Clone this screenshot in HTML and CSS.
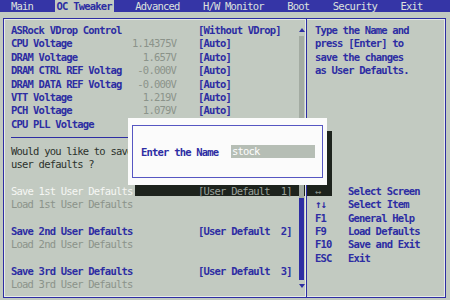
FILE: index.html
```html
<!DOCTYPE html>
<html lang="en">
<head>
  <meta charset="UTF-8" />
  <title>BIOS - OC Tweaker</title>
  <link rel="stylesheet" href="styles.css">
</head>
<body>

  <nav class="menu">
    <span class="tab">Main</span>
    <span class="tab active">OC Tweaker</span>
    <span class="tab">Advanced</span>
    <span class="tab">H/W Monitor</span>
    <span class="tab">Boot</span>
    <span class="tab">Security</span>
    <span class="tab">Exit</span>
  </nav>

  <div class="frame">
    <section class="settings">
      <div class="rows">
        <div class="row"><span class="label">ASRock VDrop Control</span><span class="val"></span><span class="opt">[Without VDrop]</span></div>
        <div class="row"><span class="label">CPU Voltage</span><span class="val">1.14375V</span><span class="opt">[Auto]</span></div>
        <div class="row"><span class="label">DRAM Voltage</span><span class="val">1.657V</span><span class="opt">[Auto]</span></div>
        <div class="row"><span class="label">DRAM CTRL REF Voltag</span><span class="val">-0.000V</span><span class="opt">[Auto]</span></div>
        <div class="row"><span class="label">DRAM DATA REF Voltag</span><span class="val">-0.000V</span><span class="opt">[Auto]</span></div>
        <div class="row"><span class="label">VTT Voltage</span><span class="val">1.219V</span><span class="opt">[Auto]</span></div>
        <div class="row"><span class="label">PCH Voltage</span><span class="val">1.079V</span><span class="opt">[Auto]</span></div>
        <div class="row"><span class="label">CPU PLL Voltage</span></div>
        <div class="sep"></div>
        <div class="row note">Would you like to save</div>
        <div class="row note">user defaults ?</div>
        <div class="row"></div>
        <div class="row selected"><span class="label">Save 1st User Defaults</span><span class="val"></span><span class="opt">[User Default  1]</span></div>
        <div class="row dim">Load 1st User Defaults</div>
        <div class="row"></div>
        <div class="row"><span class="label">Save 2nd User Defaults</span><span class="val"></span><span class="opt">[User Default  2]</span></div>
        <div class="row dim">Load 2nd User Defaults</div>
        <div class="row"></div>
        <div class="row"><span class="label">Save 3rd User Defaults</span><span class="val"></span><span class="opt">[User Default  3]</span></div>
        <div class="row dim">Load 3rd User Defaults</div>
      </div>
      <div class="scroll">
        <div class="arrow up"></div>
        <div class="track"><div class="thumb"></div></div>
        <div class="arrow down"></div>
      </div>
    </section>

    <aside class="help">
      <div class="line">Type the Name and</div>
      <div class="line">press [Enter] to</div>
      <div class="line">save the changes</div>
      <div class="line">as User Defaults.</div>
      <div class="keys">
        <div class="key shaded"><span>↔</span><span>Select Screen</span></div>
        <div class="key"><span>↑↓</span><span>Select Item</span></div>
        <div class="key"><span>F1</span><span>General Help</span></div>
        <div class="key"><span>F9</span><span>Load Defaults</span></div>
        <div class="key"><span>F10</span><span>Save and Exit</span></div>
        <div class="key"><span>ESC</span><span>Exit</span></div>
      </div>
    </aside>
  </div>

  <div class="dialog-shadow"></div>
  <div class="dialog">
    <div class="dialog-box">
      <span class="dialog-label">Enter the Name</span>
      <span class="name-field">stock</span>
    </div>
  </div>

</body>
</html>
```

FILE: styles.css
```css
:root {
  --bg: #c2cac1;
  --blue: #2d2da3;
  --menu: #3535a6;
  --gray: #8b938a;
  --dark: #2c322c;
  --light: #e6ebe6;
  --track: #a3aba2;
  --shade: #1d231d;
}

* {
  box-sizing: border-box;
}

body {
  margin: 0;
  width: 450px;
  height: 300px;
  overflow: hidden;
  background: var(--bg);
  font-family: "DejaVu Sans Mono", "Liberation Mono", monospace;
  font-size: 10.5px;
  letter-spacing: -0.8px;
  color: var(--blue);
}

/* top menu */
.menu {
  height: 12px;
  background: var(--menu);
  display: flex;
  gap: 19.5px;
  padding-left: 9px;
}

.tab {
  padding: 0 2px;
  line-height: 12px;
  color: #dde1dd;
}

.tab.active {
  background: var(--bg);
  color: var(--blue);
  font-weight: bold;
}

/* main frame */
.frame {
  position: relative;
  z-index: 2;
  margin: 6px 4px 0 3px;
  height: 280px;
  border: 1px solid var(--blue);
  box-shadow: inset 0 0 0 1px var(--light);
  display: grid;
  grid-template-columns: 303px 1fr;
}

.settings {
  display: flex;
  border-right: 1px solid var(--blue);
  box-shadow: inset -1px 0 0 var(--light);
}

.rows {
  flex: 1;
  padding: 5px 0 0 7px;
}

.row {
  display: grid;
  grid-template-columns: 121px 44px auto;
  height: 13.4px;
  line-height: 13.4px;
  white-space: pre;
  font-weight: bold;
}

.val {
  text-align: right;
  color: var(--gray);
  font-weight: normal;
}

.opt {
  padding-left: 22px;
}

.row.note {
  display: block;
  color: var(--dark);
  font-weight: normal;
}

.row.dim {
  display: block;
  color: var(--gray);
  font-weight: normal;
}

.row.selected {
  font-weight: normal;
}

.row.selected .label {
  color: #f6f7f4;
}

.row.selected .opt {
  color: #9aa19a;
}

.sep {
  height: 13.4px;
  display: flex;
  align-items: center;
}

.sep::before {
  content: "";
  flex: 1;
  height: 1px;
  background: var(--blue);
}

/* scrollbar */
.scroll {
  width: 5px;
  margin: 9px 2px 9px 4px;
  display: flex;
  flex-direction: column;
  align-items: center;
}

.arrow {
  width: 0;
  height: 0;
  border-left: 3px solid transparent;
  border-right: 3px solid transparent;
}

.arrow.up {
  border-bottom: 4px solid var(--blue);
  margin-bottom: 4px;
}

.arrow.down {
  border-top: 4px solid var(--blue);
  margin-top: 4px;
}

.track {
  flex: 1;
  width: 5px;
  background: var(--track);
  display: flex;
  flex-direction: column;
  justify-content: flex-end;
}

.thumb {
  height: 82px;
  background: var(--blue);
}

/* help column */
.help {
  padding: 5px 0 0 8px;
}

.line {
  height: 13.4px;
  line-height: 13.4px;
  white-space: pre;
  font-weight: bold;
}

.keys {
  margin-top: 107.2px;
}

.key {
  display: grid;
  grid-template-columns: 33px auto;
  height: 13.4px;
  line-height: 13.4px;
  font-weight: bold;
}

.key.shaded span:first-child {
  color: #8c948c;
  font-weight: normal;
}

/* name dialog */
.dialog-shadow {
  position: absolute;
  left: 135px;
  top: 131px;
  width: 197px;
  height: 65px;
  background: var(--shade);
  z-index: 1;
}

.dialog {
  position: absolute;
  left: 128px;
  top: 118px;
  width: 199px;
  height: 67px;
  padding: 7px 4px;
  background: #fbfbfb;
  z-index: 3;
}

.dialog-box {
  height: 100%;
  border: 1px solid #5656c2;
  display: flex;
  align-items: center;
  padding-left: 8px;
  gap: 13px;
}

.dialog-label {
  width: 77px;
  white-space: pre;
  font-weight: bold;
}

.name-field {
  width: 84px;
  height: 13px;
  line-height: 13px;
  padding-left: 1px;
  background: #b6beb5;
  color: #fdfdfd;
}
```
